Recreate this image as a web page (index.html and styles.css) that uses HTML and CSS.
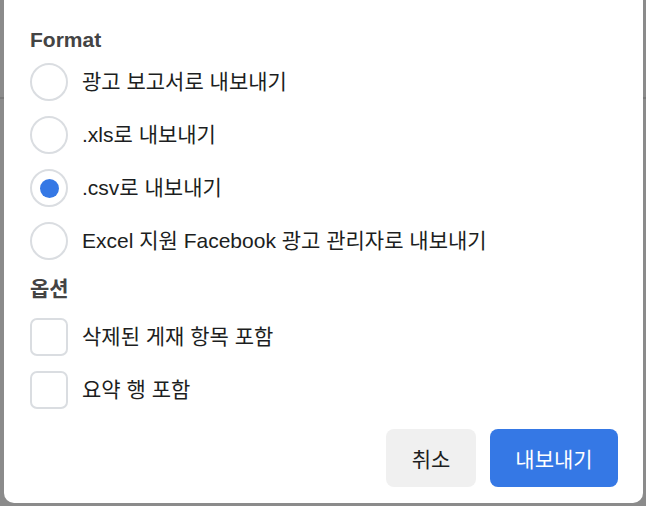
FILE: index.html
```html
<!DOCTYPE html>
<html lang="ko">
<head>
<meta charset="utf-8">
<title>내보내기</title>
<link rel="stylesheet" href="styles.css">
</head>
<body>
<div class="backdrop">
  <div class="dialog">
    <div class="section">
      <div class="heading">Format</div>
      <label class="option">
        <span class="radio"></span>
        <span class="label">광고 보고서로 내보내기</span>
      </label>
      <label class="option">
        <span class="radio"></span>
        <span class="label">.xls로 내보내기</span>
      </label>
      <label class="option">
        <span class="radio checked"><span class="dot"></span></span>
        <span class="label">.csv로 내보내기</span>
      </label>
      <label class="option">
        <span class="radio"></span>
        <span class="label">Excel 지원 Facebook 광고 관리자로 내보내기</span>
      </label>
    </div>
    <div class="section options">
      <div class="heading">옵션</div>
      <label class="option">
        <span class="checkbox"></span>
        <span class="label">삭제된 게재 항목 포함</span>
      </label>
      <label class="option">
        <span class="checkbox"></span>
        <span class="label">요약 행 포함</span>
      </label>
    </div>
    <div class="footer">
      <button class="btn btn-cancel">취소</button>
      <button class="btn btn-primary">내보내기</button>
    </div>
  </div>
</div>
</body>
</html>
```
FILE: styles.css
```css
* { box-sizing: border-box; }
html, body {
  margin: 0;
  padding: 0;
}
body {
  width: 646px;
  height: 506px;
  overflow: hidden;
  background: linear-gradient(to bottom, #8b8b8b 0, #8b8b8b 97px, #7a7a7a 97px, #7a7a7a 99px, #8b8b8b 99px);
  font-family: "Liberation Sans", "Noto Sans CJK KR", sans-serif;
  color: #1c1e21;
}
.backdrop {
  padding-left: 4px;
  width: 646px;
}
.dialog {
  width: 639px;
  height: 503px;
  background: #ffffff;
  border-radius: 0 0 10px 10px;
  padding: 28px 25px 0 26px;
  display: flex;
  flex-direction: column;
}
.section {
  display: flex;
  flex-direction: column;
  gap: 15px;
}
.section .heading {
  font-size: 21px;
  line-height: 24px;
  font-weight: 700;
  color: #444444;
  margin-bottom: -4px;
}
.options {
  margin-top: 17px;
}
.options .heading {
  margin-bottom: 2px;
}
.option {
  display: flex;
  align-items: center;
  height: 38px;
  gap: 14px;
}
.radio {
  width: 38px;
  height: 38px;
  border-radius: 50%;
  border: 2px solid #dadde1;
  display: flex;
  align-items: center;
  justify-content: center;
  flex: none;
}
.dot {
  width: 19px;
  height: 19px;
  border-radius: 50%;
  background: #3578e5;
}
.checkbox {
  width: 38px;
  height: 38px;
  border-radius: 7px;
  border: 2px solid #dadde1;
  flex: none;
}
.label {
  font-size: 21px;
  line-height: 24px;
  color: #1c1e21;
}
.footer {
  margin-top: 20px;
  display: flex;
  justify-content: flex-end;
  gap: 14px;
}
.btn {
  height: 58px;
  border: none;
  border-radius: 8px;
  font-family: "Liberation Sans", "Noto Sans CJK KR", sans-serif;
  font-size: 21px;
  padding: 0;
}
.btn-cancel {
  width: 90px;
  background: #f0f0f0;
  color: #1c1e21;
}
.btn-primary {
  width: 128px;
  background: #3578e5;
  color: #ffffff;
}
```
